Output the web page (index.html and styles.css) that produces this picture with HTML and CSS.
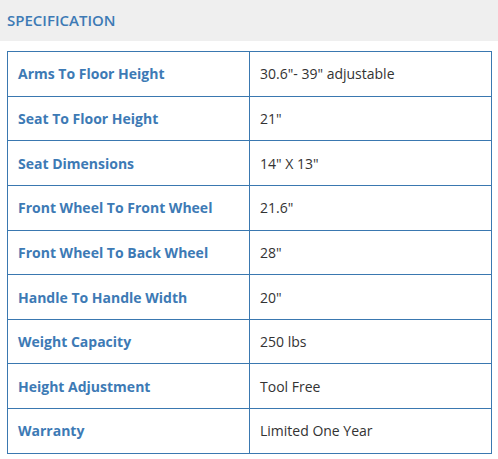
FILE: index.html
```html
<!DOCTYPE html>
<html>
<head>
<meta charset="utf-8">
<link rel="stylesheet" href="styles.css">
</head>
<body>
<div class="spec">
  <h2 class="spec-title">SPECIFICATION</h2>
  <table class="spec-table">
    <tr><th>Arms To Floor Height</th><td>30.6"- 39" adjustable</td></tr>
    <tr><th>Seat To Floor Height</th><td>21"</td></tr>
    <tr><th>Seat Dimensions</th><td>14" X 13"</td></tr>
    <tr><th>Front Wheel To Front Wheel</th><td>21.6"</td></tr>
    <tr><th>Front Wheel To Back Wheel</th><td>28"</td></tr>
    <tr><th>Handle To Handle Width</th><td>20"</td></tr>
    <tr><th>Weight Capacity</th><td>250 lbs</td></tr>
    <tr><th>Height Adjustment</th><td>Tool Free</td></tr>
    <tr><th>Warranty</th><td>Limited One Year</td></tr>
  </table>
</div>
</body>
</html>
```
FILE: styles.css
```css
html, body {
  margin: 0;
  padding: 0;
  background: #fff;
  font-family: "Open Sans", "Liberation Sans", sans-serif;
}
.spec-title {
  margin: 0;
  height: 41px;
  line-height: 41px;
  padding: 0 7px;
  background: #efefef;
  color: #3d7ab5;
  font-size: 15px;
  font-weight: 600;
}
.spec-table {
  margin: 10px 0 0 7px;
  width: 485px;
  border-collapse: collapse;
  font-size: 14px;
}
.spec-table th,
.spec-table td {
  border: 1px solid #3a78b0;
  height: 44.65px;
  padding: 0 10px;
  text-align: left;
  box-sizing: border-box;
}
.spec-table th {
  width: 242px;
  color: #3d7ab5;
  font-weight: 700;
}
.spec-table td {
  color: #333;
  font-weight: 400;
}
```
